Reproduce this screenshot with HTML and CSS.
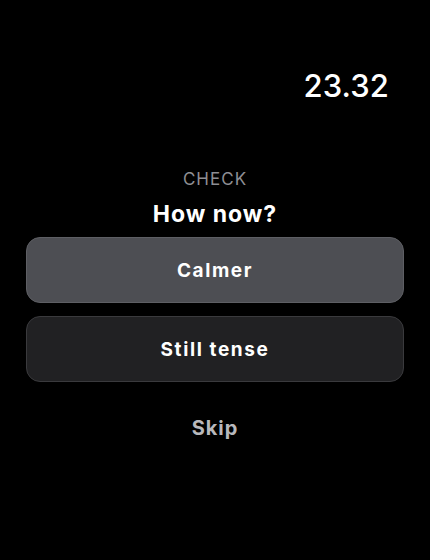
FILE: index.html
```html
<!DOCTYPE html>
<html lang="en">
  <head>
    <meta charset="UTF-8" />
    <meta name="viewport" content="width=device-width, initial-scale=1.0" />
    <title>Check</title>
    <link rel="stylesheet" href="styles.css">
  </head>
  <body>
    <div class="screen">
      <div class="top-bar">
        <span class="clock">23.32</span>
      </div>

      <div class="check">
        <div class="label">CHECK</div>
        <h1>How now?</h1>

        <div class="choices">
          <button class="choice choice-main">Calmer</button>
          <button class="choice">Still tense</button>
        </div>

        <button class="skip">Skip</button>
      </div>
    </div>
  </body>
</html>
```

FILE: styles.css
```css
body {
  margin: 0;
  background: #000;
  font-family: Inter, "Noto Sans", sans-serif;
  color: #fff;
}

.screen {
  width: 430px;
  height: 560px;
  box-sizing: border-box;
  padding: 0 26px;
}

.top-bar {
  display: flex;
  justify-content: flex-end;
  padding: 66px 15px 0 0;
  height: 40px;
}

.clock {
  font-size: 31px;
  font-weight: 500;
  line-height: 40px;
  letter-spacing: 0.1px;
}

.check {
  margin-top: 61px;
  display: flex;
  flex-direction: column;
  align-items: center;
}

.label {
  font-size: 17px;
  letter-spacing: 1px;
  color: #8e8e93;
  line-height: 24px;
}

h1 {
  margin: 9px 0 0;
  font-size: 23px;
  font-weight: 700;
  line-height: 28px;
  letter-spacing: 1px;
}

.choices {
  width: 100%;
  display: flex;
  flex-direction: column;
  gap: 13px;
  margin-top: 9px;
}

.choice {
  height: 66px;
  border-radius: 14px;
  border: 1px solid #3a3a3d;
  background: #212123;
  color: #fff;
  font-family: inherit;
  font-size: 19px;
  font-weight: 700;
  letter-spacing: 1.6px;
  cursor: pointer;
}

.choice-main {
  background: #4d4e53;
  border-color: #5e5f64;
}

.skip {
  margin-top: 33px;
  background: none;
  border: none;
  color: #b8b8bc;
  font-family: inherit;
  font-size: 20px;
  font-weight: 700;
  letter-spacing: 1px;
  cursor: pointer;
}
```
